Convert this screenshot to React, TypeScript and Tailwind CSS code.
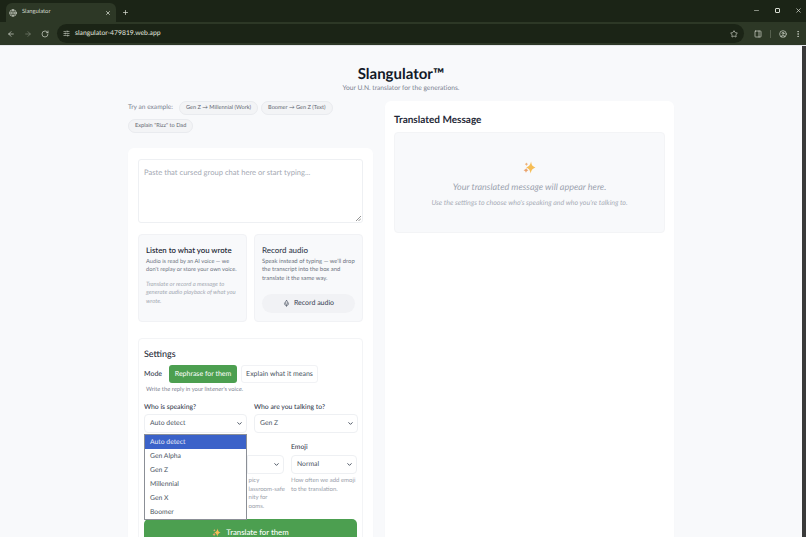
import React from "react";
import { ArrowLeft, ArrowRight, RotateCw, Star, X, Plus, Minus, Globe, SlidersHorizontal, CircleUser, EllipsisVertical, ChevronDown, Mic, PanelRight } from "lucide-react";

function Spark({ size, className }: { size: number; className?: string }) {
  return (
    <svg width={size} height={size} viewBox="0 0 24 24" className={className}>
      <path d="M15 1 C15.6 7.5 17.5 10 23 12 C17.5 14 15.6 16.5 14 23 C13 16.5 11 14 6 12 C11 10 13.5 7.5 15 1Z" fill="#f6bd55" />
      <path d="M6 12.5 C6.3 15 7.2 16 10 17 C7.2 18 6.3 19 5.5 22 C5 19 4 18 1 17 C4 16 5.2 15 6 12.5Z" fill="#e9a26c" />
      <path d="M6.5 2.5 C6.8 4.3 7.4 5 9.5 5.8 C7.4 6.6 6.8 7.3 6.3 9.2 C5.9 7.3 5.2 6.6 3.2 5.8 C5.2 5 6 4.3 6.5 2.5Z" fill="#eeb27a" />
    </svg>
  );
}

function Chip({ children }: { children: React.ReactNode }) {
  return <span className="h-[12px] px-[6px] flex items-center rounded-full border border-[#e9ebef] bg-[#f3f4f6] text-[5.6px] text-[#5f6570] whitespace-nowrap box-content">{children}</span>;
}

function Sel({ label }: { label: string }) {
  return (
    <div className="h-[19px] rounded-[4px] border border-[#eef0f3] bg-white flex items-center justify-between pl-[5px] pr-[3px] text-[6.8px] text-[#4b5563]">
      <span>{label}</span>
      <ChevronDown size={7} strokeWidth={3} className="text-[#374151]" />
    </div>
  );
}

export default function App() {
  return (
    <div className="w-[806px] h-[537px] overflow-hidden flex flex-col bg-[#f8f9fb] font-['Lato',sans-serif] antialiased [text-rendering:geometricPrecision]">
      {/* Tab strip */}
      <div className="h-[22px] shrink-0 bg-[#1b2416] flex items-end pl-[6px] relative">
        <div className="w-[110px] h-[19px] bg-[#2d3826] rounded-t-[6px] flex items-center px-[4px] gap-[4px] text-[#d8ddd2]">
          <Globe size={8} className="ml-[-1px] mr-[1px]" />
          <span className="text-[5.8px] flex-1">Slangulator</span>
          <X size={6} strokeWidth={3} className="mr-[1px]" />
        </div>
        <Plus size={7} strokeWidth={2.5} className="text-[#d8ddd2] ml-[6px] mb-[6px]" />
        <div className="ml-auto flex items-center gap-[15px] pr-[4px] mb-[8px] text-[#d8ddd2]">
          <Minus size={7} strokeWidth={2} />
          <span className="w-[5px] h-[5px] border border-[#d8ddd2] rounded-[1px]" />
          <X size={7} strokeWidth={2.5} />
        </div>
      </div>
      {/* Toolbar */}
      <div className="h-[24px] shrink-0 bg-[#2d3826] flex items-center pl-[7px] pr-[4px] text-[#d8ddd2] border-b border-[#e5e7eb]">
        <ArrowLeft size={8} />
        <ArrowRight size={8} className="ml-[9px] text-[#7d8576]" />
        <RotateCw size={8} className="ml-[9px]" />
        <div className="ml-[8px] flex-1 h-[19px] rounded-full bg-[#1b2416] flex items-center pl-[6px] pr-[6px]">
          <SlidersHorizontal size={7} />
          <span className="ml-[5px] text-[6.8px] text-[#e3e6df]">slangulator-479819.web.app</span>
          <Star size={8} className="ml-auto" />
        </div>
        <PanelRight size={8} className="ml-[10px]" />
        <span className="ml-[8px] w-px h-[8px] bg-[#56604e]" />
        <CircleUser size={8} className="ml-[8px]" />
        <EllipsisVertical size={8} className="ml-[7px]" />
      </div>
      {/* Page */}
      <div className="flex-1 min-h-0 flex">
        <div className="flex-1 min-w-0 overflow-hidden flex flex-col items-center pt-[19px] bg-[#f8f9fb]">
          <h1 className="text-[15px] leading-[18px] font-bold text-[#111827]">Slangulator™</h1>
          <p className="text-[6.7px] leading-[10px] text-[#7b8190]">Your U.N. translator for the generations.</p>
          <div className="w-[546px] mt-[8px] flex gap-[12px] items-start">
            {/* Left column */}
            <div className="w-[245px] shrink-0">
              <div className="flex flex-wrap items-center gap-x-[3px] gap-y-[4px]">
                <span className="text-[6.6px] text-[#7b8190] mr-[3px]">Try an example:</span>
                <Chip>Gen Z → Millennial (Work)</Chip>
                <Chip>Boomer → Gen Z (Text)</Chip>
                <Chip>Explain "Rizz" to Dad</Chip>
              </div>
              <div className="mt-[15px] bg-white rounded-[6px] px-[10px] pt-[11px] shadow-[0_1px_2px_rgba(0,0,0,0.02)]">
                <div className="relative h-[64px] border border-[#eef0f3] rounded-[3px] px-[5px] pt-[7px] text-[7.6px] text-[#a4a9b3]">
                  Paste that cursed group chat here or start typing...
                  <svg className="absolute right-[1px] bottom-[1px]" width="5" height="5" viewBox="0 0 5 5" stroke="#666" strokeWidth="0.7"><path d="M0 5L5 0M2.5 5L5 2.5" /></svg>
                </div>
                <div className="mt-[11px] grid grid-cols-[109px_109px] gap-[7px]">
                  <div className="h-[88px] bg-[#f8f9fb] border border-[#f1f2f5] rounded-[4px] px-[7px] pt-[9px]">
                    <div className="text-[7.8px] leading-[12px] font-semibold text-[#1f2937] whitespace-nowrap">Listen to what you wrote</div>
                    <p className="w-[96.5px] text-[5.7px] leading-[8.4px] text-[#6b7280] mt-[2px]">Audio is read by an AI voice — we don't replay or store your own voice.</p>
                    <p className="text-[5.9px] leading-[8.4px] italic text-[#a4a9b3] mt-[6px]">Translate or record a message to generate audio playback of what you wrote.</p>
                  </div>
                  <div className="h-[88px] bg-[#f8f9fb] border border-[#f1f2f5] rounded-[4px] px-[7px] pt-[9px]">
                    <div className="text-[8px] leading-[12px] font-medium text-[#374151]">Record audio</div>
                    <p className="text-[5.9px] leading-[8.4px] text-[#6b7280] mt-[2px]">Speak instead of typing — we'll drop the transcript into the box and translate it the same way.</p>
                    <div className="mt-[11px] h-[19px] rounded-full bg-[#f1f2f5] flex items-center justify-center gap-[4px] text-[7px] text-[#374151]">
                      <Mic size={7} />
                      <span>Record audio</span>
                    </div>
                  </div>
                </div>
                {/* Settings */}
                <div className="relative mt-[16px] border border-[#f3f4f6] rounded-[4px] px-[5px] pt-[8px] h-[240px]">
                  <div className="text-[9px] leading-[14px] font-medium text-[#1f2937]">Settings</div>
                  <div className="mt-[4px] flex items-center">
                    <span className="text-[7px] font-medium text-[#374151] w-[25px]">Mode</span>
                    <span className="h-[18px] w-[68px] rounded-[3px] bg-[#4c9f50] text-white text-[7px] flex items-center justify-center">Rephrase for them</span>
                    <span className="ml-[4px] h-[18px] w-[77px] rounded-[3px] border border-[#f1f2f5] text-[#4b5563] text-[7px] flex items-center justify-center">Explain what it means</span>
                  </div>
                  <p className="text-[5.8px] leading-[8px] text-[#7b8190] mt-[3px] ml-[2px]">Write the reply in your listener's voice.</p>
                  <div className="mt-[8px] grid grid-cols-[103px_104px] gap-[7px]">
                    <div>
                      <div className="text-[6.8px] leading-[11px] font-medium text-[#374151]">Who is speaking?</div>
                      <div className="mt-[1px]"><Sel label="Auto detect" /></div>
                    </div>
                    <div>
                      <div className="text-[6.8px] leading-[11px] font-medium text-[#374151]">Who are you talking to?</div>
                      <div className="mt-[1px]"><Sel label="Gen Z" /></div>
                    </div>
                  </div>
                  <div className="mt-[9px] flex gap-[7px] pl-[103px]">
                    <div className="w-[37px] mt-[13px]">
                      <div className="h-[19px] border border-[#eef0f3] rounded-r-[4px] flex items-center justify-end pr-[3px]"><ChevronDown size={7} strokeWidth={3} className="text-[#374151]" /></div>
                      <div className="text-[6px] leading-[8.5px] text-[#9aa0ab] mt-[3px] whitespace-pre">{" picy\n lassroom-safe\n nity for\n ooms."}</div>
                    </div>
                    <div className="w-[67px]">
                      <div className="text-[6.8px] leading-[10px] font-medium text-[#374151]">Emoji</div>
                      <div className="mt-[3px]"><Sel label="Normal" /></div>
                      <p className="text-[6px] leading-[8.5px] text-[#9aa0ab] mt-[3px]">How often we add emoji to the translation.</p>
                    </div>
                  </div>
                  <div className="absolute left-[5px] right-[5px] top-[180px] h-[30px] rounded-[5px] bg-[#4c9f50] flex justify-center pt-[8px] text-[7.8px] text-white gap-[5px]">
                    <Spark size={9} className="mt-[1px]" />
                    <span className="font-medium">Translate for them</span>
                  </div>
                  {/* Open dropdown */}
                  <div className="absolute left-[5px] top-[95px] w-[103px] bg-white border border-[#8b8f96] text-[6.8px] text-[#4b5563]">
                    {["Auto detect", "Gen Alpha", "Gen Z", "Millennial", "Gen X", "Boomer"].map((o, i) => (
                      <div key={o} className={`h-[14px] flex items-center pl-[5px] ${i === 0 ? "bg-[#3b62c9] text-[#e8ecf8]" : ""}`}>{o}</div>
                    ))}
                  </div>
                </div>
              </div>
            </div>
            {/* Right column */}
            <div className="w-[289px] shrink-0 h-[500px] bg-white rounded-[6px] px-[9px] pt-[12px] shadow-[0_1px_2px_rgba(0,0,0,0.02)]">
              <h2 className="text-[10px] leading-[14px] font-bold text-[#1f2937]">Translated Message</h2>
              <div className="mt-[5px] h-[101px] bg-[#f8f9fb] border border-[#f3f4f6] rounded-[4px] flex flex-col items-center pt-[28px]">
                <Spark size={13} />
                <p className="text-[9px] leading-[12px] italic text-[#9ca3af] mt-[7px]">Your translated message will appear here.</p>
                <p className="text-[7px] leading-[9px] italic text-[#a8adb7] mt-[6px]">Use the settings to choose who's speaking and who you're talking to.</p>
              </div>
            </div>
          </div>
        </div>
        <div className="w-[4px] shrink-0 bg-[#3a3a3a]" />
      </div>
    </div>
  );
}
